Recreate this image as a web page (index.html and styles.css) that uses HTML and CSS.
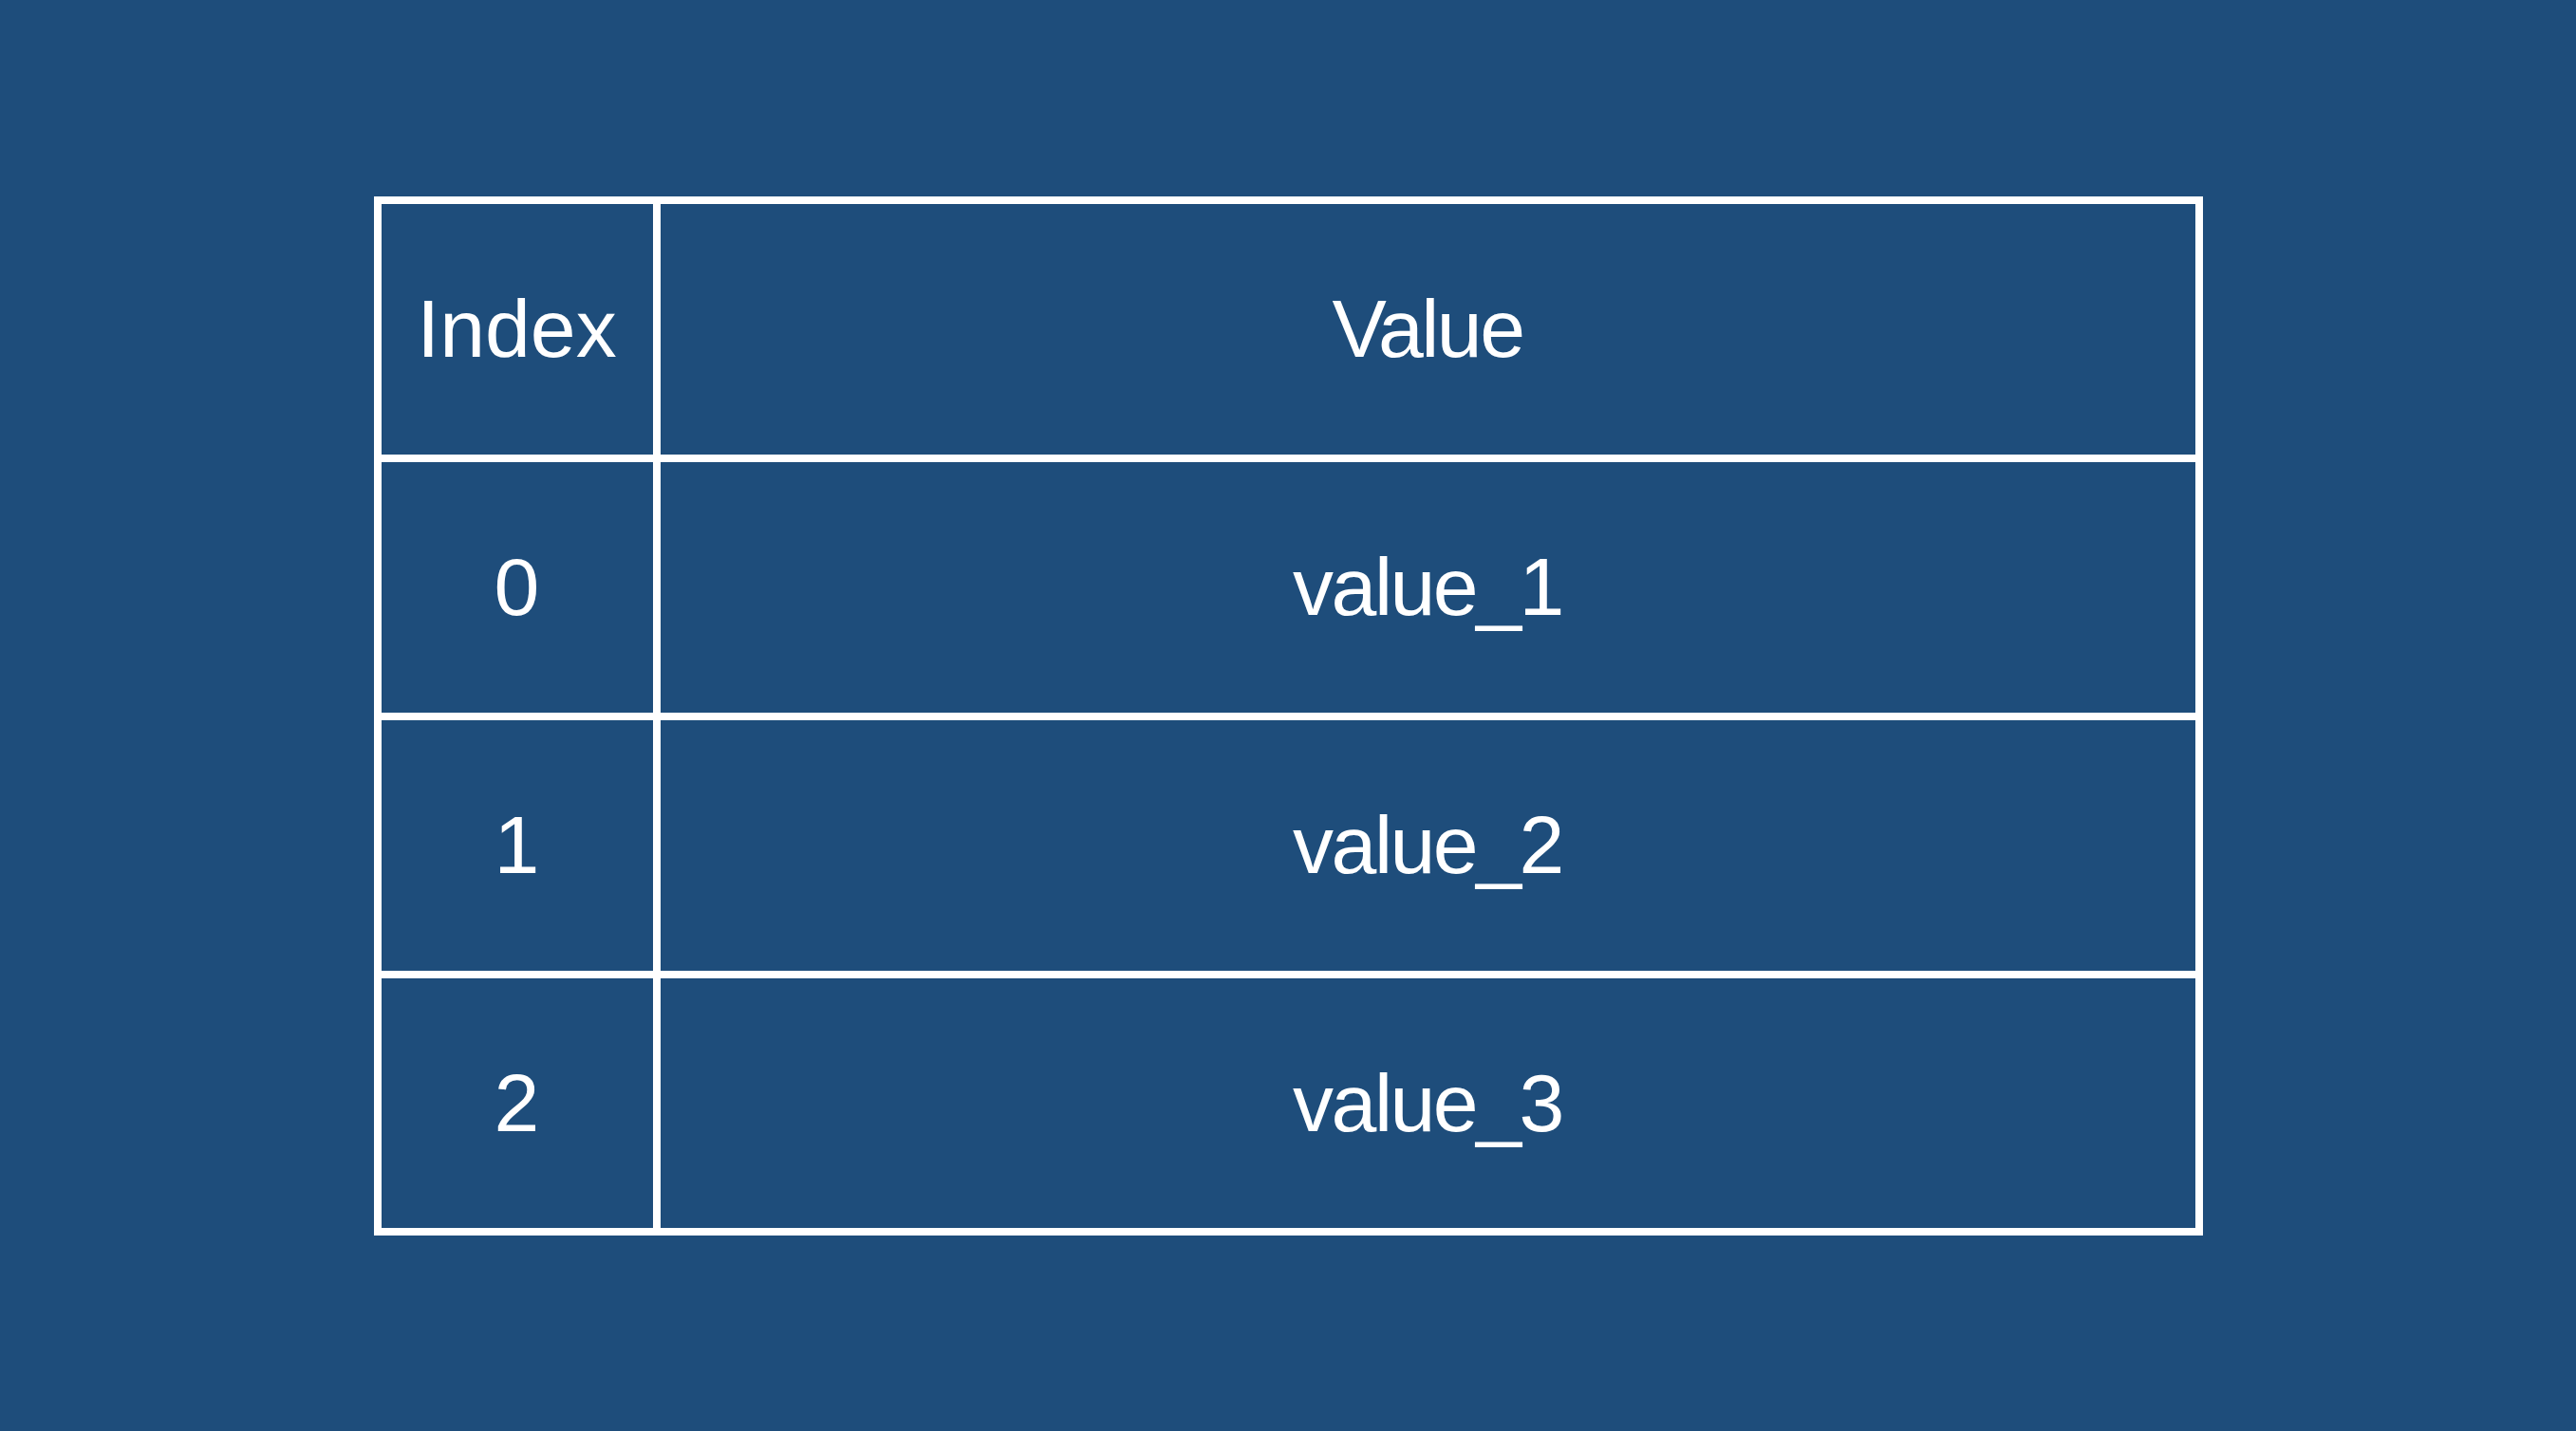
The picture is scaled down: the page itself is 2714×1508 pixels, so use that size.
FILE: index.html
```html
<!DOCTYPE html>
<html lang="en">
<head>
<meta charset="utf-8">
<title>Table</title>
<link rel="stylesheet" href="styles.css">
</head>
<body>
<main class="stage">
  <table class="data-table">
    <thead>
      <tr>
        <th class="col-index">Index</th>
        <th class="col-value">Value</th>
      </tr>
    </thead>
    <tbody>
      <tr><td class="col-index">0</td><td class="col-value">value_1</td></tr>
      <tr><td class="col-index">1</td><td class="col-value">value_2</td></tr>
      <tr><td class="col-index">2</td><td class="col-value">value_3</td></tr>
    </tbody>
  </table>
</main>
</body>
</html>
```
FILE: styles.css
```css
html, body {
  margin: 0;
  padding: 0;
  background: #1e4d7b;
}
.stage {
  width: 100vw;
  height: 100vh;
  display: flex;
  align-items: center;
  justify-content: center;
}
.data-table {
  border-collapse: separate;
  border-spacing: 8px;
  background: #ffffff;
  font-family: "Liberation Sans", Arial, Helvetica, sans-serif;
  font-size: 86px;
  color: #ffffff;
}
.data-table th,
.data-table td {
  background: #1e4d7b;
  padding: 0;
  height: 264px;
  text-align: center;
  vertical-align: middle;
  font-weight: normal;
}
.data-table tbody tr:last-child td {
  height: 263px;
}
.col-index {
  width: 286px;
}
.col-value {
  width: 1617px;
  letter-spacing: -2.5px;
}
```
